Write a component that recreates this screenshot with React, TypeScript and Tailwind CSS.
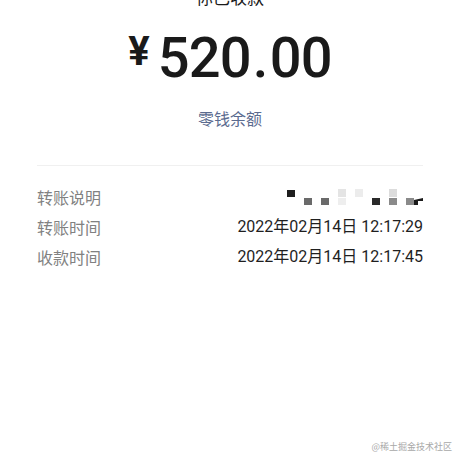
import React from "react";

const cjk = '"Noto Sans CJK SC", sans-serif';
const num = 'Roboto, "Noto Sans CJK SC", sans-serif';

function Mosaic() {
  return (
    <svg width="136" height="17" viewBox="0 0 136 17" className="block">
      <rect x="0" y="1" width="8" height="7" fill="#1e1e1e" />
      <rect x="17" y="9" width="8" height="7" fill="#6a6a6a" />
      <rect x="34" y="9" width="8" height="7" fill="#6a6a6a" />
      <rect x="51" y="0" width="8" height="8" fill="#e4e4e4" />
      <rect x="51" y="9" width="8" height="7" fill="#eeeeee" />
      <rect x="68" y="0" width="8" height="8" fill="#ececec" />
      <rect x="85" y="9" width="8" height="7" fill="#2a2a2a" />
      <rect x="102" y="0" width="8" height="8" fill="#dcdcdc" />
      <rect x="102" y="9" width="8" height="7" fill="#8a8a8a" />
      <rect x="119" y="9" width="8" height="7" fill="#8a8a8a" />
      <path d="M127 11 L136 9 L136 12 L131 12 L131 16 L127 16 Z" fill="#1a1a1a" />
    </svg>
  );
}

function Row({ label, children }: { label: string; children: React.ReactNode }) {
  return (
    <div className="flex items-center justify-between h-[30px]">
      <span className="text-[16px] text-[#818181]" style={{ fontFamily: cjk }}>
        {label}
      </span>
      {children}
    </div>
  );
}

export default function App() {
  return (
    <div className="relative w-[460px] h-[460px] bg-white overflow-hidden">
      <div className="flex flex-col items-center">
        <div
          className="mt-[-13px] h-[20px] leading-[20px] text-[17px] text-[#1a1a1a]"
          style={{ fontFamily: cjk }}
        >
          你已收款
        </div>
        <div className="mt-[23px] flex items-start gap-[8px] text-[#1a1a1a]">
          <span
            className="mt-[2px] text-[40px] leading-none font-bold"
            style={{ fontFamily: "Roboto, sans-serif" }}
          >
            ¥
          </span>
          <span
            className="text-[56px] leading-none font-medium tracking-[-0.8px]"
            style={{ fontFamily: "Roboto, sans-serif" }}
          >
            520<span className="mx-[2px]">.</span>00
          </span>
        </div>
        <div
          className="mt-[20px] h-[24px] leading-[24px] text-[16px] text-[#5b6b8f]"
          style={{ fontFamily: cjk }}
        >
          零钱余额
        </div>
      </div>
      <div className="mx-[37px] mt-[35px] h-px bg-[#f0f0f0]" />
      <div className="mx-[37px] mt-[16px] flex flex-col">
        <Row label="转账说明">
          <Mosaic />
        </Row>
        <Row label="转账时间">
          <span className="text-[16px] text-[#1f1f1f]" style={{ fontFamily: num }}>
            2022年02月14日 12:17:29
          </span>
        </Row>
        <Row label="收款时间">
          <span className="text-[16px] text-[#1f1f1f]" style={{ fontFamily: num }}>
            2022年02月14日 12:17:45
          </span>
        </Row>
      </div>
      <div
        className="absolute right-[8px] bottom-[7px] text-[9px] text-[#a8a8a8]"
        style={{ fontFamily: cjk }}
      >
        @稀土掘金技术社区
      </div>
    </div>
  );
}
